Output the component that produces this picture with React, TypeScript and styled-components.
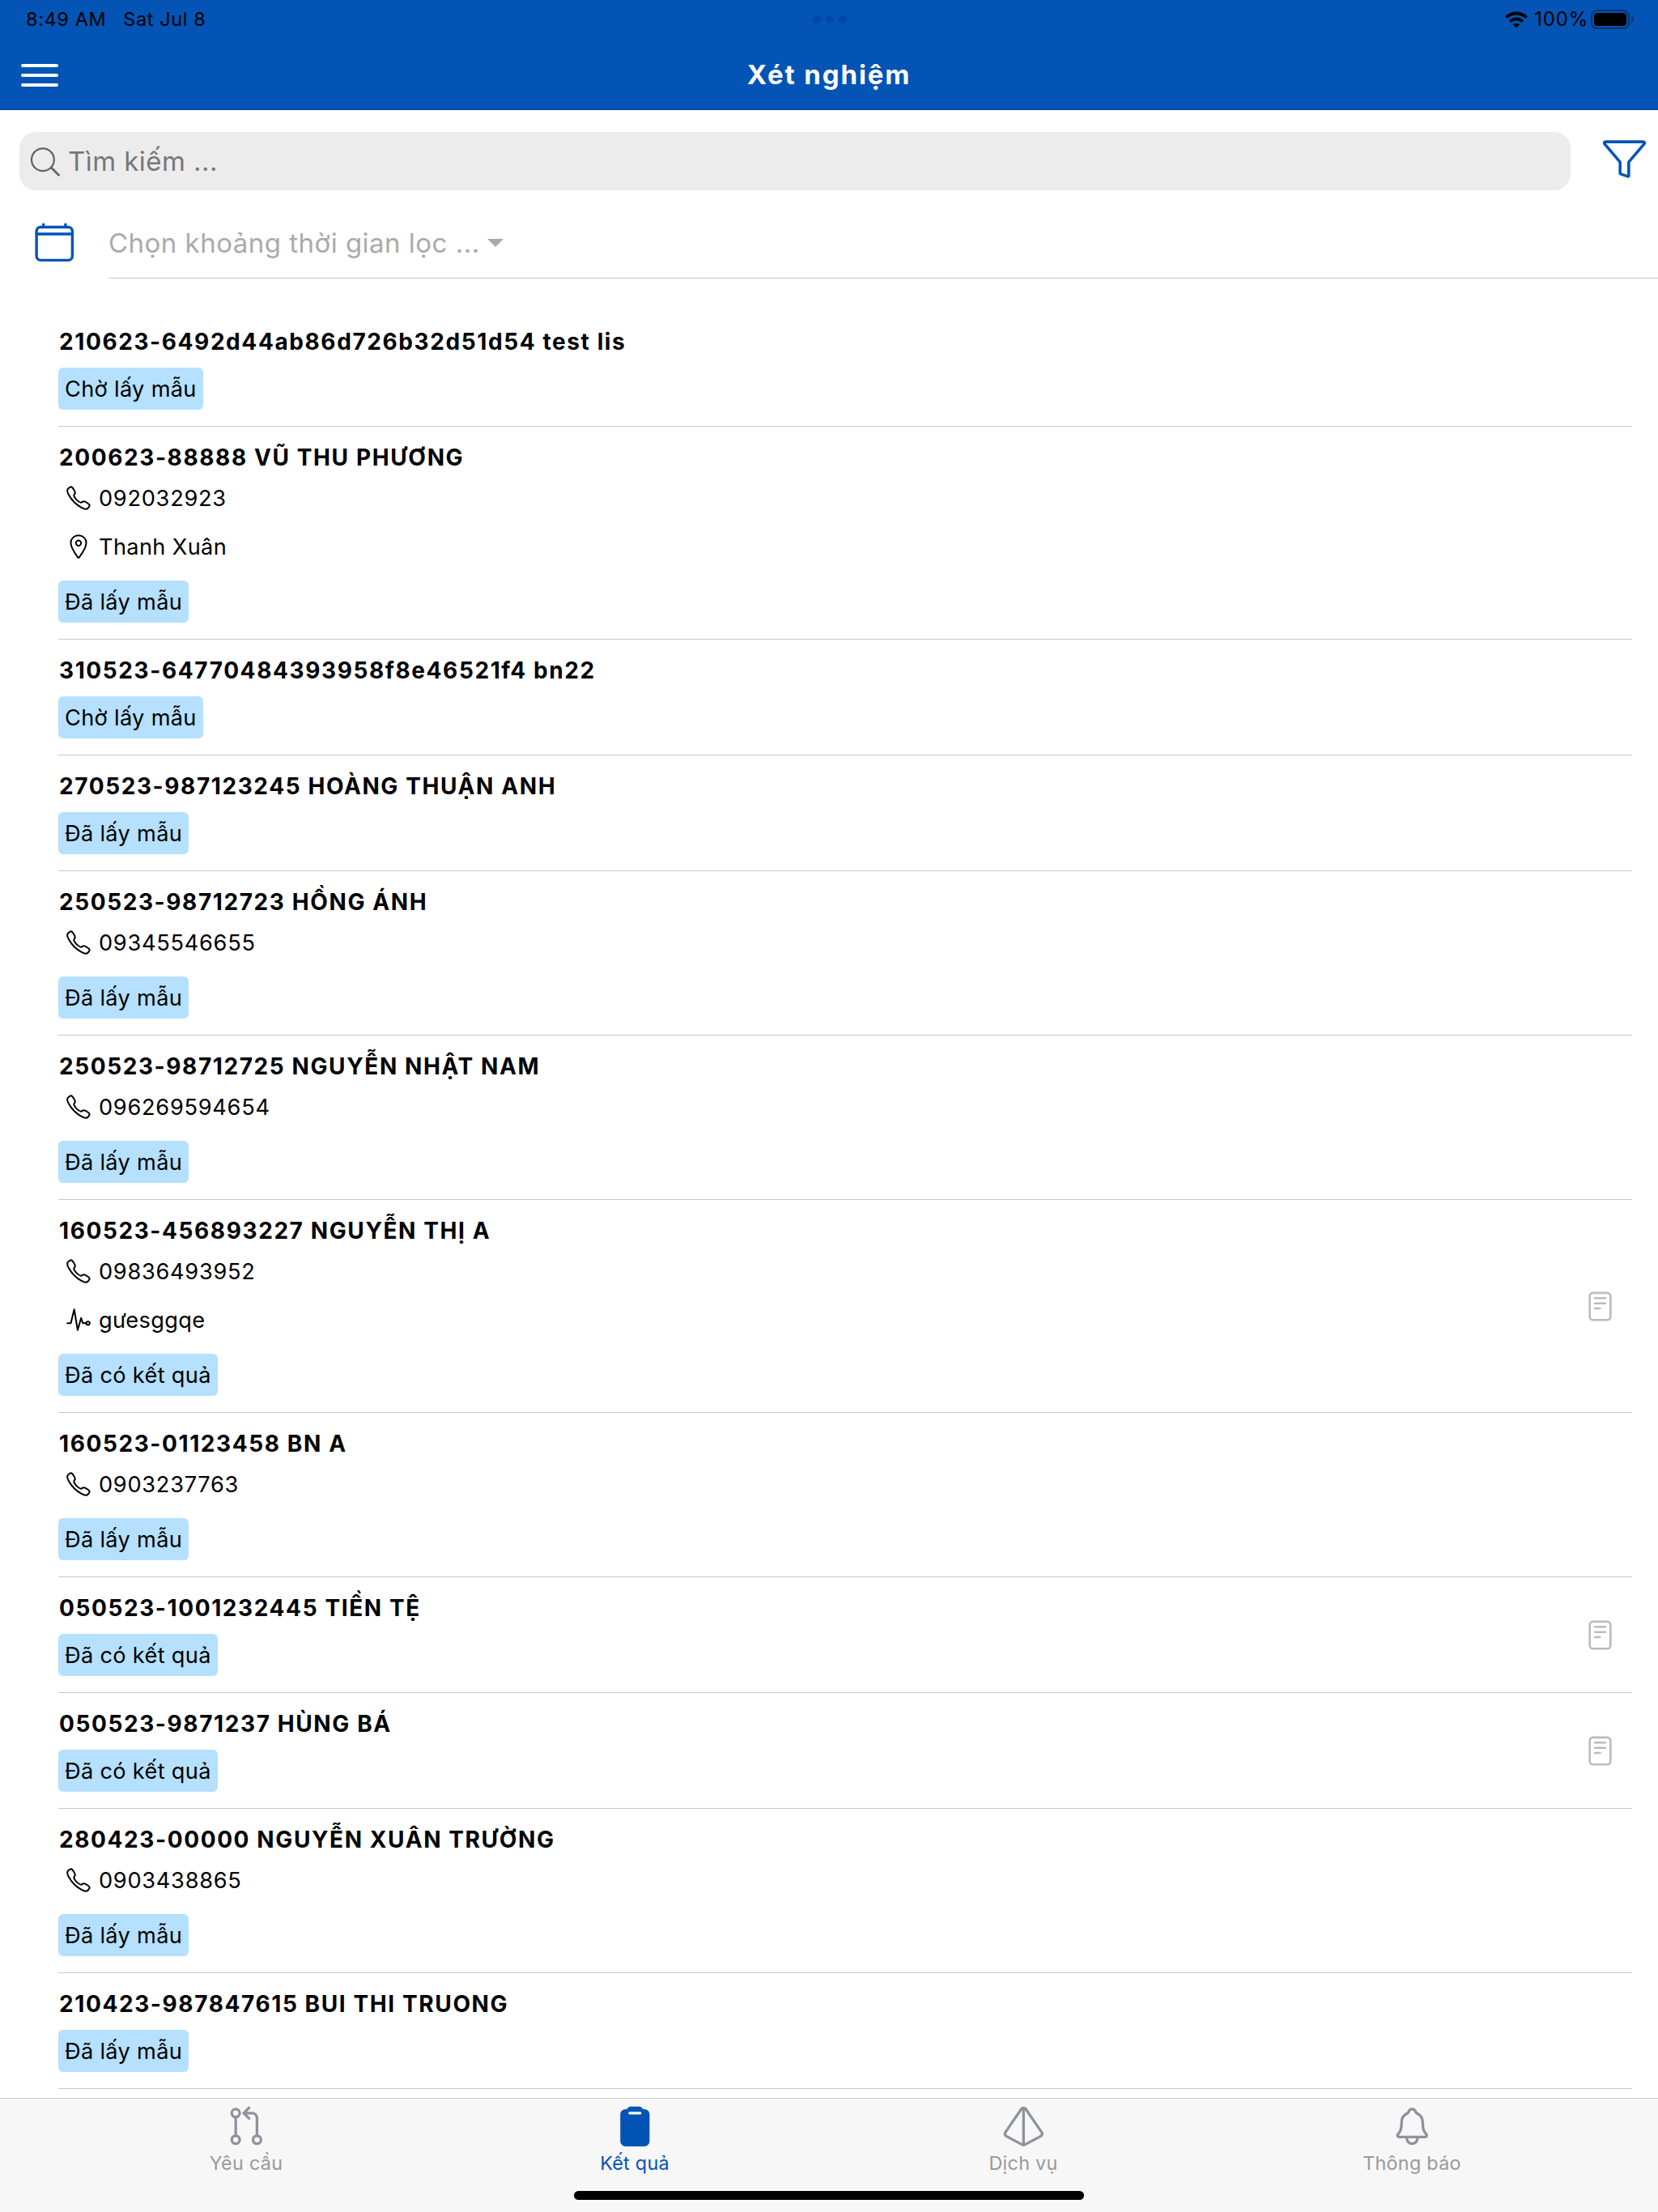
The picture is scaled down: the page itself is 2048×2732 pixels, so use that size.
import React from "react";
import styled, { createGlobalStyle } from "styled-components";
import type { IconType } from "react-icons";
import {
  IoCalendarClearOutline,
  IoCallOutline,
  IoClipboard,
  IoFunnelOutline,
  IoGitPullRequestOutline,
  IoLocationOutline,
  IoNotificationsOutline,
  IoPrismOutline,
  IoPulseOutline,
  IoReaderOutline,
} from "react-icons/io5";

const BLUE = "#0354b4";
const LINE = "#c8c7cc";

const GlobalStyle = createGlobalStyle`
  * { box-sizing: border-box; }
  body {
    margin: 0;
    background: #fff;
    color: #000;
    font-family: Inter, "Noto Sans", "Liberation Sans", sans-serif;
  }
`;

const Screen = styled.div`
  display: flex;
  flex-direction: column;
  width: 2048px;
  height: 2732px;
  overflow: hidden;
  background: #fff;
`;

const Header = styled.header`
  flex: none;
  height: 136px;
  background: ${BLUE};
  border-bottom: 1px solid #034a9e;
`;

const StatusBar = styled.div`
  display: grid;
  grid-template-columns: 1fr auto 1fr;
  align-items: center;
  height: 48px;
  padding: 0 30px 0 32px;
  font-size: 23.5px;
  line-height: 48px;
`;

const StatusTime = styled.div`
  display: flex;
  gap: 21px;
  letter-spacing: 0.6px;
`;

const Dots = styled.div`
  display: flex;
  gap: 6px;
`;

const Dot = styled.span`
  width: 10px;
  height: 10px;
  border-radius: 50%;
  background: #0345ab;
`;

const StatusRight = styled.div`
  display: flex;
  align-items: center;
  justify-content: flex-end;
`;

const Percent = styled.span`
  margin: 0 3px 0 8px;
  font-size: 24px;
  letter-spacing: 0.8px;
`;

const TitleBar = styled.div`
  display: grid;
  grid-template-columns: 1fr auto 1fr;
  align-items: center;
  height: 87px;
  padding: 3px 26px 0;
`;

const MenuButton = styled.button`
  display: flex;
  flex-direction: column;
  gap: 7.6px;
  width: 46px;
  padding: 0;
  border: 0;
  background: none;
`;

const MenuLine = styled.span`
  height: 4px;
  border-radius: 2px;
  background: #fff;
`;

const Title = styled.h1`
  margin: 0 0 2px;
  color: #fff;
  font-size: 33px;
  font-weight: 700;
  line-height: 44px;
  letter-spacing: 1.9px;
`;

const SearchRow = styled.div`
  display: flex;
  flex: none;
  align-items: center;
  height: 72px;
  margin-top: 27px;
  padding: 0 13px 0 24px;
`;

const SearchField = styled.label`
  display: flex;
  flex: none;
  align-items: center;
  width: 1916px;
  height: 72px;
  padding-left: 11px;
  border-radius: 20px;
  background: #ececec;
  color: #777;
  font-size: 33px;
  letter-spacing: 0.45px;
`;

const SearchText = styled.span`
  margin-left: 7px;
`;

const FilterButton = styled.button`
  display: flex;
  margin: 0 0 6px auto;
  padding: 0;
  border: 0;
  background: none;
  color: ${BLUE};
`;

const DateRow = styled.div`
  display: flex;
  flex: none;
  height: 109px;
  padding-left: 40px;
`;

const DateIcon = styled.div`
  display: flex;
  align-items: center;
  width: 94px;
  padding-top: 20px;
  color: ${BLUE};
`;

const DateSelect = styled.div`
  display: flex;
  flex: 1;
  align-items: center;
  padding-top: 21px;
  border-bottom: 1px solid ${LINE};
  color: #aaa;
  font-size: 33px;
  letter-spacing: 0.48px;
`;

const Caret = styled.span`
  margin-left: 9px;
  border: 10px solid transparent;
  border-top-color: #aaa;
  border-bottom: 0;
`;

const List = styled.main`
  flex: 1;
  min-height: 0;
  overflow: hidden;
  padding: 40px 32px 0 72px;
`;

const Item = styled.article`
  display: flex;
  align-items: center;
  justify-content: space-between;
  padding: 20px 19px 20px 0;
  border-bottom: 1px solid ${LINE};
`;

const ItemTitle = styled.h2`
  margin: 0 0 2px;
  padding-left: 1px;
  font-size: 28px;
  font-weight: 700;
  line-height: 36px;
  letter-spacing: 1.6px;
  white-space: nowrap;
`;

const Detail = styled.div<{ $digits?: boolean }>`
  display: flex;
  align-items: center;
  height: 60px;
  padding-left: 8px;
  font-size: 27.2px;
  letter-spacing: ${(p) => (p.$digits ? 0.72 : 0.35)}px;
  svg * { stroke-width: 30px; }
`;

const DetailText = styled.span`
  margin-left: 8px;
`;

const Badge = styled.span`
  display: inline-flex;
  align-items: center;
  height: 52px;
  margin-top: 12px;
  padding: 0 8px;
  border-radius: 6px;
  background: #b5e0ff;
  font-size: 27.2px;
  letter-spacing: 0.31px;
  white-space: nowrap;
  vertical-align: top;
`;

const FileButton = styled.button`
  display: flex;
  padding: 1px 0 0;
  border: 0;
  background: none;
  color: #bbb;
`;

const TabBar = styled.nav`
  display: flex;
  flex: none;
  flex-direction: column;
  align-items: center;
  height: 141px;
  border-top: 1px solid ${LINE};
  background: #f7f7f7;
`;

const Tabs = styled.div`
  display: grid;
  grid-template-columns: repeat(4, 480px);
  justify-content: center;
  height: 114px;
`;

const Tab = styled.a<{ $active?: boolean }>`
  display: flex;
  flex-direction: column;
  align-items: center;
  gap: 3.4px;
  padding-top: 8px;
  color: ${(p) => (p.$active ? BLUE : "#999")};
  font-size: 23.3px;
  line-height: 32px;
  letter-spacing: 0.3px;
  svg { color: ${(p) => (p.$active ? BLUE : "#8e929b")}; }
`;

const HomeIndicator = styled.div`
  width: 630px;
  height: 11px;
  border-radius: 6px;
  background: #000;
`;

type Result = {
  title: string;
  phone?: string;
  address?: string;
  note?: string;
  status: string;
  file?: boolean;
};

const WAIT = "Chờ lấy mẫu";
const TAKEN = "Đã lấy mẫu";
const DONE = "Đã có kết quả";

const results: Result[] = [
  { title: "210623-6492d44ab86d726b32d51d54 test lis", status: WAIT },
  { title: "200623-88888 VŨ THU PHƯƠNG", phone: "092032923", address: "Thanh Xuân", status: TAKEN },
  { title: "310523-64770484393958f8e46521f4 bn22", status: WAIT },
  { title: "270523-987123245 HOÀNG THUẬN ANH", status: TAKEN },
  { title: "250523-98712723 HỒNG ÁNH", phone: "09345546655", status: TAKEN },
  { title: "250523-98712725 NGUYỄN NHẬT NAM", phone: "096269594654", status: TAKEN },
  { title: "160523-456893227 NGUYỄN THỊ A", phone: "09836493952", note: "gưesggqe", status: DONE, file: true },
  { title: "160523-01123458 BN A", phone: "0903237763", status: TAKEN },
  { title: "050523-1001232445 TIỀN TỆ", status: DONE, file: true },
  { title: "050523-9871237 HÙNG BÁ", status: DONE, file: true },
  { title: "280423-00000 NGUYỄN XUÂN TRƯỜNG", phone: "0903438865", status: TAKEN },
  { title: "210423-987847615 BUI THI TRUONG", status: TAKEN },
];

const tabs: { label: string; icon: IconType; active?: boolean }[] = [
  { label: "Yêu cầu", icon: IoGitPullRequestOutline },
  { label: "Kết quả", icon: IoClipboard, active: true },
  { label: "Dịch vụ", icon: IoPrismOutline },
  { label: "Thông báo", icon: IoNotificationsOutline },
];

function WifiIcon() {
  return (
    <svg width="28" height="21" viewBox="0 0 28 21" fill="none" stroke="#000" strokeWidth="3.9">
      <path d="M1.4 7.6a18 18 0 0 1 25.2 0" />
      <path d="M6.2 12.5a11.2 11.2 0 0 1 15.6 0" />
      <path d="M14 20.5l-4.1-4.2a5.9 5.9 0 0 1 8.2 0z" fill="#000" stroke="none" />
    </svg>
  );
}

function BatteryIcon() {
  return (
    <svg width="53" height="24" viewBox="0 0 53 24">
      <rect x="1" y="1" width="46" height="22" rx="6.5" fill="none" stroke="#000" strokeOpacity="0.38" strokeWidth="2" />
      <rect x="4" y="4" width="40" height="16" rx="4" fill="#000" />
      <path d="M50 8c1.8.8 3 2.2 3 4s-1.2 3.2-3 4z" fill="#000" fillOpacity="0.4" />
    </svg>
  );
}

function SearchIcon() {
  return (
    <svg width="42" height="42" viewBox="0 0 42 42" fill="none" stroke="#666" strokeWidth="2.3">
      <circle cx="17.9" cy="19.2" r="13.9" />
      <path d="M28 28.8l10.3 10.2" strokeWidth="2.8" />
    </svg>
  );
}

function DetailLine({ icon: Icon, text, digits }: { icon: IconType; text: string; digits?: boolean }) {
  return (
    <Detail $digits={digits}>
      <Icon size={34} />
      <DetailText>{text}</DetailText>
    </Detail>
  );
}

function ResultItem({ title, phone, address, note, status, file }: Result) {
  return (
    <Item>
      <div>
        <ItemTitle>{title}</ItemTitle>
        {phone && <DetailLine icon={IoCallOutline} text={phone} digits />}
        {address && <DetailLine icon={IoLocationOutline} text={address} />}
        {note && <DetailLine icon={IoPulseOutline} text={note} />}
        <Badge>{status}</Badge>
      </div>
      {file && (
        <FileButton>
          <IoReaderOutline size={41} />
        </FileButton>
      )}
    </Item>
  );
}

export default function App() {
  return (
    <Screen>
      <GlobalStyle />
      <Header>
        <StatusBar>
          <StatusTime>
            <span>8:49 AM</span>
            <span>Sat Jul 8</span>
          </StatusTime>
          <Dots>
            <Dot />
            <Dot />
            <Dot />
          </Dots>
          <StatusRight>
            <WifiIcon />
            <Percent>100%</Percent>
            <BatteryIcon />
          </StatusRight>
        </StatusBar>
        <TitleBar>
          <MenuButton>
            <MenuLine />
            <MenuLine />
            <MenuLine />
          </MenuButton>
          <Title>Xét nghiệm</Title>
        </TitleBar>
      </Header>
      <SearchRow>
        <SearchField>
          <SearchIcon />
          <SearchText>Tìm kiếm ...</SearchText>
        </SearchField>
        <FilterButton>
          <IoFunnelOutline size={57} />
        </FilterButton>
      </SearchRow>
      <DateRow>
        <DateIcon>
          <IoCalendarClearOutline size={54.5} />
        </DateIcon>
        <DateSelect>
          Chọn khoảng thời gian lọc ...
          <Caret />
        </DateSelect>
      </DateRow>
      <List>
        {results.map((r) => (
          <ResultItem key={r.title} {...r} />
        ))}
      </List>
      <TabBar>
        <Tabs>
          {tabs.map(({ label, icon: Icon, active }) => (
            <Tab key={label} $active={active}>
              <Icon size={52.6} />
              {label}
            </Tab>
          ))}
        </Tabs>
        <HomeIndicator />
      </TabBar>
    </Screen>
  );
}
